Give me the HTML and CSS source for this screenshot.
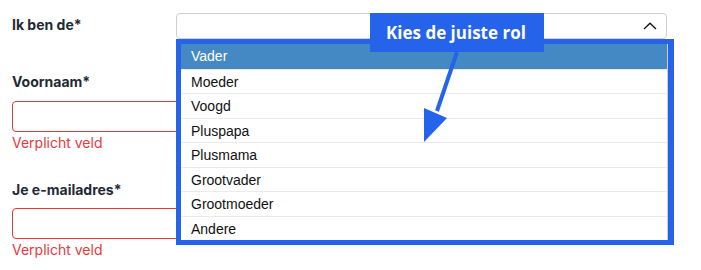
FILE: index.html
```html
<!DOCTYPE html>
<html lang="nl">
<head>
<meta charset="utf-8">
<title>Formulier</title>
<link rel="stylesheet" href="styles.css">
</head>
<body>
<form class="form">
  <div class="row-select">
    <label class="label label-inline">Ik ben de*</label>
    <div class="select">
      <svg class="chevron" width="14" height="8" viewBox="0 0 14 8"><path d="M1 7 L7 1.2 L13 7" fill="none" stroke="#111" stroke-width="1.3"/></svg>
    </div>
  </div>
  <div class="group">
    <label class="label">Voornaam*</label>
    <div class="input"></div>
    <div class="error">Verplicht veld</div>
  </div>
  <div class="group group-2">
    <label class="label">Je e-mailadres*</label>
    <div class="input"></div>
    <div class="error">Verplicht veld</div>
  </div>
</form>

<ul class="dropdown">
  <li class="option selected">Vader</li>
  <li class="option">Moeder</li>
  <li class="option">Voogd</li>
  <li class="option">Pluspapa</li>
  <li class="option">Plusmama</li>
  <li class="option">Grootvader</li>
  <li class="option">Grootmoeder</li>
  <li class="option">Andere</li>
</ul>

<div class="callout">Kies de juiste rol</div>
<svg class="arrow" width="60" height="100" viewBox="410 50 60 100">
  <line x1="457" y1="52" x2="437" y2="111" stroke="#2563eb" stroke-width="4"/>
  <polygon points="424,108 447,118 424,142" fill="#2563eb"/>
</svg>
</body>
</html>
```
FILE: styles.css
```css
html, body {
  margin: 0;
  padding: 0;
  background: #fff;
}
body {
  width: 701px;
  height: 270px;
  position: relative;
  overflow: hidden;
  font-family: "Inter", "Noto Sans", sans-serif;
  color: #1f2a37;
}
.form {
  padding: 13px 0 0 12px;
  width: 655px;
}
.row-select {
  display: flex;
  align-items: flex-start;
}
.label {
  display: block;
  font-size: 14px;
  font-weight: 700;
  line-height: 20px;
  color: #1f2a37;
}
.label-inline {
  width: 164px;
  margin-top: 2px;
}
.select {
  flex: 1;
  height: 26px;
  border: 1px solid #cfcfcf;
  border-radius: 4px;
  position: relative;
  box-sizing: border-box;
}
.chevron {
  position: absolute;
  right: 9px;
  top: 8px;
}
.group {
  margin-top: 33px;
}
.group-2 {
  margin-top: 27px;
}
.input {
  margin-top: 9px;
  height: 31px;
  box-sizing: border-box;
  border: 1px solid #e53935;
  border-radius: 4px;
}
.group-2 .input {
  margin-top: 8px;
}
.error {
  font-size: 14px;
  line-height: 20px;
  color: #e8383d;
  margin-top: 1px;
}
.dropdown {
  position: absolute;
  left: 176px;
  top: 39px;
  width: 487px;
  height: 196px;
  margin: 0;
  padding: 0;
  list-style: none;
  border: 5px solid #2563eb;
  border-right-width: 6px;
  background: #fff;
  box-shadow: inset -1px 0 0 #cfcfcf;
  font-family: "Liberation Sans", Arial, sans-serif;
  font-size: 14px;
  color: #111;
}
.option {
  height: 24.5px;
  line-height: 24px;
  padding-left: 10px;
  box-sizing: border-box;
  border-top: 1px solid #ebebeb;
  margin-right: 1px;
}
.option.selected {
  border-top: none;
  background: #4589c4;
  color: #fff;
}
.callout {
  position: absolute;
  left: 370px;
  top: 13px;
  width: 174px;
  height: 39px;
  box-sizing: border-box;
  background: #2563eb;
  color: #fff;
  font-family: "Open Sans", "Noto Sans", sans-serif;
  font-weight: 700;
  font-size: 17px;
  line-height: 39px;
  padding-left: 16px;
  white-space: nowrap;
}
.arrow {
  position: absolute;
  left: 410px;
  top: 50px;
}
```
